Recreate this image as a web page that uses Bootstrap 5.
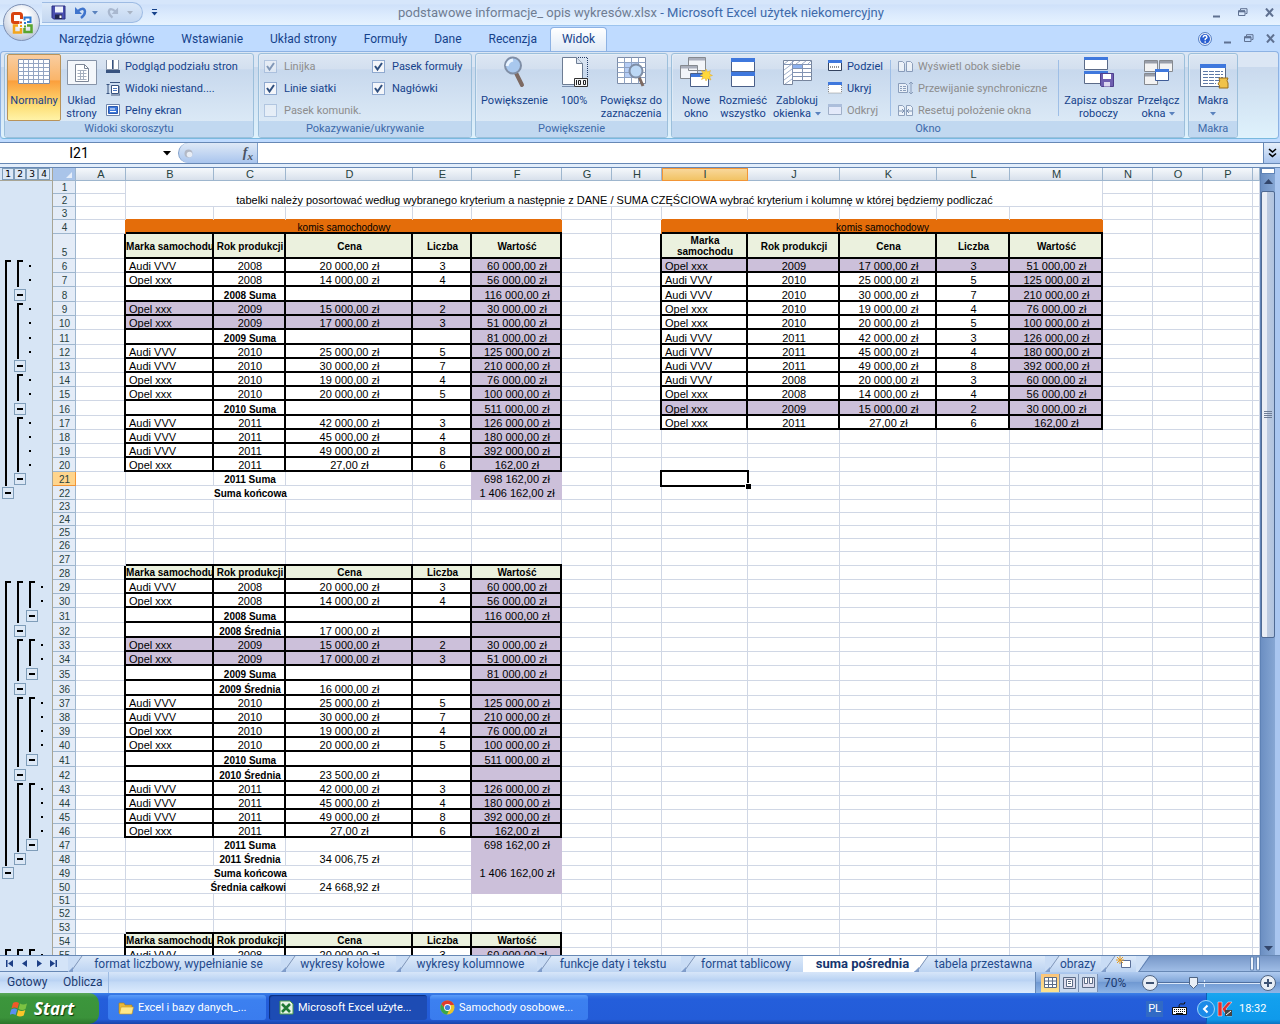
<!DOCTYPE html>
<html lang="pl">
<head>
<meta charset="utf-8">
<meta name="viewport" content="width=device-width, initial-scale=1">
<title>podstawowe informacje_ opis wykresów.xlsx - Microsoft Excel</title>
<link href="https://cdn.jsdelivr.net/npm/bootstrap@5.3.0/dist/css/bootstrap.min.css" rel="stylesheet">
<style>
:root{--ink:#15428b;--grid:#d0d7e5}
body{font:11px/13px Roboto,"Open Sans",sans-serif;color:var(--ink);background:#bfdbff}
button{font:inherit;color:inherit;border:0;background:none;padding:0}
svg{display:block;flex:none}
.titlebar{height:26px;background:linear-gradient(#d6e6fb 0 15%,#cfe1fa 20%,#dcebfd 60%,#e6f3ff);border-bottom:1px solid #9cc4ee}
.office-btn{left:3px;top:4px;width:37px;height:37px;border-radius:50%;background:radial-gradient(circle at 50% 35%,#fff 0 25%,#d5dce8 60%,#9fb0cc);border:1px solid #7d90b4;z-index:5}
.quick{margin-left:42px;height:21px;width:101px;border:1px solid #9dbbe3;border-radius:0 11px 11px 0;border-left:0;background:linear-gradient(#dbe8f8,#c3d7f1);padding-left:9px}
.title-text{font-size:13px;line-height:28px;padding-right:89px}
.title-text span{color:#6f7d92}.title-text b{font-weight:400;color:#3e6aaa}
.win-btns{gap:17px;padding-right:6px}
.doc-btns{gap:12px;padding-right:5px}
.menu-tabs{height:25px;padding-left:45px}
.menu-tabs .tab-link{font-size:12px;line-height:23px;padding:0 12px 0 13px;color:var(--ink);text-decoration:none;border:1px solid transparent;border-bottom:0}
.menu-tabs .on{background:linear-gradient(#fff,#dfeaf7);border-color:#8db2e3;border-radius:4px 4px 0 0;height:24px;padding:0 11px}
.ribbon{height:89px;border:1px solid #8db2e3;border-bottom-color:#79b9de;border-radius:4px;background:linear-gradient(#dbe6f4 0 17%,#c9d9ed 18%,#dff2fc);padding:1px 0 0 3px;gap:3px;margin-right:1px}
.rgroup{height:85px;border:1px solid #9cbfdb;border-radius:3px;background:linear-gradient(#dde7f3 0,#d3dfef 18%,#c7d8ed 19%,#dbe9f6 82%);box-shadow:inset 1px 1px #ecf3fa80}
.rgroup .cap{height:16px;line-height:15px;background:#c1d8f0;color:#3e6aaa;text-align:center;border-radius:0 0 2px 2px}
.rbody{padding:0 5px}
.g-views{width:250px;margin-right:1px}.g-views .rbody{padding:0 2px}
.g-show{width:214px}.g-zoom{width:193px}.g-win{width:514px}.g-mac{width:50px}
.big{display:flex;flex-direction:column;align-items:center;height:67px;line-height:13px;padding-top:1px;white-space:nowrap}
.big svg{margin-bottom:3px}
.big.sel{width:54px;border:1px solid #b9935a;border-radius:2px;background:linear-gradient(#f9cda0,#fab56a 38%,#fb9f3c 40%,#fde07a 80%,#fff3a8);padding-top:0}
.big.sel svg{margin-bottom:5px}
.big .arrow{margin:0}
.big .below{margin-top:5px}
.b41{width:41px}.b38{width:38px}.b56{width:56px}.b52{width:52px}.b79{width:79px}
.small-list{display:flex;flex-direction:column;padding-top:1px}
.small-list>*{height:22px;display:flex;align-items:center;gap:5px;white-space:nowrap}
.small-list label{gap:7px}
.l-views{padding-left:4px}.l-checks{width:108px}.l-split{padding-left:5px;width:68px}.l-side{width:160px}
.off{color:#8d8d8d}
.off svg{opacity:.55}
.vsep{width:1px;height:56px;background:#9ebee6;margin-top:6px}
.vsep.first{margin-left:-1px;margin-right:7px}
.ck{appearance:none;width:13px;height:13px;margin:0;border:1px solid #8fa9cf;background:#f4f6fa;flex:none}
.ck:checked{background:#f4f6fa url("data:image/svg+xml,%3Csvg xmlns='http://www.w3.org/2000/svg' viewBox='0 0 11 11'%3E%3Cpath d='M2 5l2.5 3.5L9 2' fill='none' stroke='%2330507f' stroke-width='2'/%3E%3C/svg%3E")}
.ck:disabled{opacity:.5}
.fbar{height:22px;border-top:1px solid #6788b5;border-bottom:1px solid #6788b5;margin-top:3px;background:#fff}
.namebox{width:178px;border:0;font:14px/20px Roboto,"Liberation Sans",sans-serif;text-align:center;padding:0 20px 0 0;background:#fff}
.name-arrow{right:7px;top:8px}
.fx{width:80px;background:linear-gradient(#dfe9f6,#a9c5ee);border-radius:10px 0 0 10px;border:1px solid #7f9fca;border-width:0 1px;padding:0 4px 0 5px}
.fx span{font:italic 700 14px/18px "Liberation Serif",serif;color:#4a5364}
.fx sub{font-size:11px}
.finput{border:0;outline:0;min-width:0}
.fdown{width:17px;background:linear-gradient(#e6effa,#a9c5ee);border-left:1px solid #6788b5}
.strip{height:4px;background:#e3eefb;border-bottom:1px solid #6788b5}
.sheet{min-height:0;overflow:hidden;background:#fff}
.cells{min-width:0;overflow:hidden}
.grid{table-layout:fixed;border-collapse:separate;border-spacing:0;width:100%;font:11px/11px "Liberation Sans",Arial,sans-serif;color:#000}
.grid td,.grid th{padding:0 0 1px;white-space:nowrap;vertical-align:bottom;text-align:center;font-weight:400}
.grid td{--rw:-1px;--bw:-1px;--rc:var(--grid);--bc:var(--grid);box-shadow:inset var(--rw) 0 var(--rc),inset 0 var(--bw) var(--bc)}
.grid td.kb{--bw:-2px;--bc:#000;box-shadow:inset 0 var(--bw) var(--bc),inset var(--rw) 0 var(--rc)}
.grid td.kr{--rw:-2px;--rc:#000}
.grid td.nr{--rw:0px}
.grid td.lft{text-align:left;padding-left:3px}
.grid td.bold{font-weight:700;font-size:10px}
.grid td.hd{background:#ebf1de;font-weight:700;font-size:10px;vertical-align:middle}
.grid td.wrp{white-space:normal}
.grid td.pur{background:#ccc0da}
.grid td.sum{--rc:#ccc0da;--bc:#ccc0da}
.grid td.pr{--rc:#ccc0da}
.grid td.ora{background:#e46d0a;--rc:#e46d0a;font-size:10px}
.grid td.orb{--bc:#e46d0a}
.grid td.orr{--rc:#e46d0a}
.grid .colh{height:13px;background:linear-gradient(#f6f9fc,#d5deea);box-shadow:inset -1px -1px #9eb6ce;color:#27413e;padding:0 0 1px}
.grid .colh.pick{background:linear-gradient(#f9d99f,#f1c15f);box-shadow:inset 0 0 0 1px #f29536}
.grid .corner{background:#a9c4e9;box-shadow:inset -1px -1px #9eb6ce}
.grid .rowh{background:#e4ecf7;box-shadow:inset -1px -1px #9eb6ce;color:#27413e;font-size:10px}
.grid .rowh.pick{background:#ffd58d;box-shadow:inset -1px -1px #f29536}
.grid .outl{background:#d7e5f5;box-shadow:inset -1px 0 #a8a595;padding:0;vertical-align:top}
.grid .outl.top{box-shadow:inset -1px -1px #a8a595}
.slots{display:flex;padding-left:2px}
.slot{width:12px;height:100%;display:flex;align-items:center}
.slot.bar::before{content:"";width:2px;height:100%;margin-left:3px;background:#000}
.slot.cnr{padding-top:1px}
.slot.cnr::before{content:"";width:6px;height:100%;margin-left:3px;border:solid #000;border-width:2px 0 0 2px}
.slot.dot::before{content:"";width:2px;height:2px;margin-left:3px;background:#000}
.lvl{width:12px;height:12px;border:1px solid #7f9db9;background:#dce8f6;font:9px/10px "DejaVu Sans",sans-serif;color:#000;display:flex;align-items:center;justify-content:center}
.lvl i{width:6px;height:2px;background:#000}
.spill{display:flex;justify-content:flex-end}
.cursor{left:-2px;top:-2px;right:-1px;height:17px;border:2px solid #000}
.cursor::after{content:"";position:absolute;right:-4px;bottom:-4px;width:6px;height:6px;background:#000;border:solid #fff;border-width:1px 0 0 1px}
.vscroll{flex:none;width:15px;background:linear-gradient(90deg,#6c8fc2,#86a7d4);border-left:1px solid #5f83b6}
.vsplit{height:6px;border:1px solid #5f83b6;background:#fff}
.thumb{height:447px;border:1px solid #4f6a93;border-radius:2px;background:linear-gradient(90deg,#e9eef5 40%,#bccbe0 45%,#b0c3df);margin-top:17px}
.up{top:-13px}
.edge{flex:none;width:5px;background:#a9c6f0}
.sheettabs{height:17px;background:linear-gradient(#7797c8,#9fbde6);border-top:1px solid #6788b5;border-bottom:1px solid #6788b5;font-size:12px;line-height:16px}
.sheettabs .lead-in{width:68px;background:#d4e4f8;padding-left:6px}
.tab-split{margin-left:auto;margin-right:20px}
.stab{height:16px;background:linear-gradient(#dce9f9,#bdd4f2);white-space:nowrap;text-decoration:none;color:#1f4a8c;display:flex}
.stab span{flex:1;text-align:center;padding-right:7px}
.stab.on{background:#fff;font-weight:700;font-size:13px;color:#15356e}
.stab.on span{padding:0 0 0 8px}
.w1{width:213px}.w2{width:115px}.w3{width:141px}.w4{width:144px}.w5{width:122px}.w6{width:111px}.w7{width:131px}.w8{width:56px}.w9{width:35px}
.status{height:21px;background:linear-gradient(#d7e6f9,#b9d2f3 40%,#c4daf6 50%,#dcebfd);font-size:12px;line-height:20px;color:#1b3a70}
.status .mode{padding-left:7px;width:63px}
.status .calc{width:46px;border-right:1px solid #9dbbe3}
.status .rt{width:245px;background:linear-gradient(#b0cbf0,#83a8da 45%,#7099d2 50%,#8fb5e6);border-left:1px solid #6788b5;padding-left:5px}
.status .pct{padding-left:6px;width:43px}
.vbtn{width:19px;height:18px;background:#c9d9ee;border-right:1px solid #7d93b5;display:flex;align-items:center;justify-content:center}
.vbtn.on{background:linear-gradient(#fbc47a,#fde38e)}
.taskbar{height:31px;background:linear-gradient(#3b80e8,#2c66dc 12%,#245edb 20%,#235cd8 85%,#1a44a8);color:#fff;font:11px/14px Roboto,sans-serif}
.start{width:99px;border-radius:0 10px 10px 0;background:linear-gradient(#5aa85a,#3c963c 15%,#3a923a 80%,#2b742b);font:italic 700 17px/28px "Open Sans",sans-serif;text-shadow:1px 1px 1px #0a3a0a;color:#fff;padding-left:10px;gap:5px}
.tasks{padding-left:9px}
.task{width:158px;height:25px;border-radius:3px;background:linear-gradient(#5a9cf8,#3c80f0 20%,#3a7cee);padding-left:10px;gap:4px;margin:2px 3px 0 0}
.task.on{background:#1d4cb4;box-shadow:inset 1px 1px 1px #0c2f80}
.lang{gap:9px;padding-right:19px}
.lang span{background:#316ac5;padding:1px 2px}
.tray{width:74px;background:linear-gradient(#1aa6f0,#12a0ee 20%,#0f9aeb 85%,#0c72c0);border-left:1px solid #0d5fb5}
.tray .chev{margin-left:-10px}
.tray .kav{margin:0 6px 0 2px}
</style>
</head>
<body class="vh-100 overflow-hidden d-flex flex-column">
<header class="position-relative">
  <button class="office-btn position-absolute d-flex align-items-center justify-content-center" aria-label="Przycisk pakietu Office">
    <svg width="24" height="24" viewBox="0 0 24 24" fill="none"><path d="M9.500 11.500H4Q2.500 11.500 2.500 10V4Q2.500 2.500 4 2.500H9.500Q11.500 2.500 11.500 4.500V8" stroke="#d8430f" stroke-width="3"/><path d="M14.500 9.500V6.500H20.500V11H17" stroke="#2e7bd0" stroke-width="2"/><path d="M8 14.500H4V21.500H11V17" stroke="#f3a51c" stroke-width="2.500"/><path d="M14.500 17V21H21.500V14.500H17" stroke="#58a52e" stroke-width="2.500"/><path d="M10 10.500h2v2h-2z" fill="#d8430f"/><path d="M14 11h2v2h-2z" fill="#2e7bd0"/><path d="M10 14h2v2h-2z" fill="#f3a51c"/><path d="M14 14.500h2v2h-2z" fill="#58a52e"/></svg>
  </button>
  <div class="titlebar d-flex align-items-center">
    <div class="quick d-flex align-items-center">
      <button aria-label="Zapisz"><svg width="15" height="15" viewBox="0 0 15 15"><path d="M1 1h13v13H2.500L1 12.500z" fill="#4a4fb0" stroke="#2a2f80"/><path d="M4 1.500h8v6H4z" fill="#eef2fb"/><path d="M4 9.500h7v4.500H4z" fill="#222750"/><path d="M8.500 10.500h2V13h-2z" fill="#fff"/></svg></button>
      <button class="ms-2" aria-label="Cofnij"><svg width="14" height="13" viewBox="0 0 14 13"><path d="M3.500 5.500Q10 0 11 5.500Q11 9 7 12" fill="none" stroke="#3f74cc" stroke-width="2.400"/><path d="M1 1v7h7z" fill="#3f74cc"/></svg></button>
      <svg class="ms-1" width="6" height="4" viewBox="0 0 6 4"><path d="M0 0h6L3 3.500z" fill="#5a82bd"/></svg>
      <button class="ms-2" aria-label="Ponów"><svg width="13" height="13" viewBox="0 0 14 13"><path d="M10.500 5.500Q4 0 3 5.500Q3 9 7 12" fill="none" stroke="#a9b8cf" stroke-width="2.400"/><path d="M13 1v7H6z" fill="#a9b8cf"/></svg></button>
      <svg class="ms-2" width="6" height="4" viewBox="0 0 6 4"><path d="M0 0h6L3 3.500z" fill="#a9b4c4"/></svg>
    </div>
    <svg class="ms-2" width="7" height="7" viewBox="0 0 7 7"><path d="M1 .5h5" stroke="#15428b"/><path d="M.5 3h6L3.500 6.500z" fill="#15428b"/></svg>
    <div class="title-text flex-fill text-center text-nowrap"><span>podstawowe informacje_ opis wykresów.xlsx</span> <b>- Microsoft Excel użytek niekomercyjny</b></div>
    <div class="win-btns d-flex align-items-center">
      <svg width="8" height="10" viewBox="0 0 8 10"><path d="M0 8.500h7" stroke="#5f7191" stroke-width="2"/></svg>
      <svg width="10" height="9" viewBox="0 0 10 9" fill="none" stroke="#5f7191"><path d="M2.500 2V.7H9v4.800H7.500M.5 2.800h6.500v4.700H.5z"/><path d="M.5 3.300h6.500" stroke-width="2"/></svg>
      <svg width="9" height="9" viewBox="0 0 9 9"><path d="M1 .5l7 8M8 .5l-7 8" stroke="#5f7191" stroke-width="2"/></svg>
    </div>
  </div>
  <nav class="menu-tabs d-flex align-items-end">
    <a class="tab-link" href="#">Narzędzia główne</a><a class="tab-link" href="#">Wstawianie</a><a class="tab-link" href="#">Układ strony</a><a class="tab-link" href="#">Formuły</a><a class="tab-link" href="#">Dane</a><a class="tab-link" href="#">Recenzja</a><a class="tab-link on" href="#">Widok</a>
    <div class="doc-btns ms-auto d-flex align-items-center align-self-center">
      <svg width="14" height="14" viewBox="0 0 14 14"><circle cx="7" cy="7" r="6.400" fill="#fff" stroke="#4773bd"/><circle cx="7" cy="7" r="5" fill="#2a5fd0"/><path d="M5 5.500Q5.200 3.500 7 3.500T9 5.300Q9 6.300 7.200 7.200V8.300M7.200 9.300v1.400" fill="none" stroke="#fff" stroke-width="1.400"/></svg>
      <svg width="8" height="10" viewBox="0 0 8 10"><path d="M0 8.500h7" stroke="#5f7191" stroke-width="2"/></svg>
      <svg width="10" height="9" viewBox="0 0 10 9" fill="none" stroke="#5f7191"><path d="M2.500 2V.7H9v4.800H7.500M.5 2.800h6.500v4.700H.5z"/><path d="M.5 3.300h6.500" stroke-width="2"/></svg>
      <svg width="9" height="9" viewBox="0 0 9 9"><path d="M1 .5l7 8M8 .5l-7 8" stroke="#5f7191" stroke-width="2"/></svg>
    </div>
  </nav>
</header>

<section class="ribbon d-flex">
  <div class="rgroup g-views d-flex flex-column">
    <div class="rbody flex-fill d-flex">
      <button class="big sel"><svg width="34" height="34" viewBox="0 0 34 34"><path d="M1.500 4.500h31v24h-31z" fill="#fff" stroke="#7d8da8"/><path d="M1.500 8.500h31M1.500 12.500h31M1.500 16.500h31M1.500 20.500h31M1.500 24.500h31M6.500 4.500v24M11.500 4.500v24M16.500 4.500v24M21.500 4.500v24M26.500 4.500v24" stroke="#94a5c2"/></svg>Normalny</button>
      <button class="big b41"><svg width="34" height="36" viewBox="0 0 34 36"><path d="M2.500 5.500h29v24h-29z" fill="#f4f7fb" stroke="#8794a8"/><path d="M10.500 9.500h9l4 4v13h-13z" fill="#fff" stroke="#7d8797"/><path d="M19.500 9.500v4h4" fill="none" stroke="#7d8797"/><path d="M12.500 15.500h9M12.500 18.500h9M12.500 21.500h9M12.500 24.500h9M15.500 15v10M18.500 15v10" stroke="#a5afbe"/></svg>Układ<br>strony</button>
      <div class="small-list l-views">
        <button><svg width="14" height="14" viewBox="0 0 14 14"><path d="M0 1h13v12H0z" fill="#8794a8"/><path d="M1 1h5v9H1zM8 1h4v9H8z" fill="#fff"/><path d="M0 11h14v3H0z" fill="#37527f"/><path d="M6.500 1v9" stroke="#37527f"/></svg>Podgląd podziału stron</button>
        <button><svg width="14" height="15" viewBox="0 0 14 15"><path d="M.5 3.500h3M2 3.500v9M.5 12.500h3M4 1.500h10" stroke="#37527f"/><path d="M5.500 4.500h7v8h-7z" fill="#fff" stroke="#37527f"/><path d="M7 7.500h4M7 9.500h4" stroke="#4d78c0"/><path d="M5 14h9V5" fill="none" stroke="#4b5e80"/></svg>Widoki niestand....</button>
        <button><svg width="14" height="13" viewBox="0 0 14 13"><path d="M.5.500h13v11H.5z" fill="#fff" stroke="#6f86ad"/><path d="M2.500 2.500h9v7h-9z" fill="#3c78dc" stroke="#2c5aae"/><path d="M4 5h5M4 7.500h6" stroke="#fff"/></svg>Pełny ekran</button>
      </div>
    </div>
    <div class="cap">Widoki skoroszytu</div>
  </div>
  <div class="rgroup g-show d-flex flex-column">
    <div class="rbody flex-fill d-flex">
      <div class="small-list l-checks">
        <label class="off"><input class="ck" type="checkbox" checked disabled>Linijka</label>
        <label><input class="ck" type="checkbox" checked>Linie siatki</label>
        <label class="off"><input class="ck" type="checkbox" disabled>Pasek komunik.</label>
      </div>
      <div class="small-list">
        <label><input class="ck" type="checkbox" checked>Pasek formuły</label>
        <label><input class="ck" type="checkbox" checked>Nagłówki</label>
      </div>
    </div>
    <div class="cap">Pokazywanie/ukrywanie</div>
  </div>
  <div class="rgroup g-zoom d-flex flex-column">
    <div class="rbody flex-fill d-flex justify-content-between">
      <button class="big"><svg width="34" height="36" viewBox="0 0 34 36"><path d="M19 18l6 12" stroke="#7d6a62" stroke-width="4" stroke-linecap="round"/><circle cx="16" cy="10.500" r="8" fill="#a9c8ee" stroke="#7f8ea6" stroke-width="2"/><path d="M10 11Q11 6 16 5" stroke="#eaf4ff" stroke-width="3" fill="none"/></svg>Powiększenie</button>
      <button class="big"><svg width="30" height="36" viewBox="0 0 30 36"><path d="M3.500 2.500h14l6 6v21h-20z" fill="#fff" stroke="#6d7c93"/><path d="M17.500 2.500v6h6" fill="#dce5f2" stroke="#6d7c93"/><path d="M19 2.500h9.500v21M3.500 31.500h11" fill="none" stroke="#223a66" stroke-dasharray="1 1"/><path d="M15.500 23.500h13v8h-13z" fill="#f6f6f6" stroke="#333"/><path d="M17.500 25v5M19.500 25.500h2v4h-2zM24.500 25.500h2v4h-2z" fill="none" stroke="#222"/></svg>100%</button>
      <button class="big"><svg width="34" height="36" viewBox="0 0 34 36"><path d="M3.500 2.500h28v26h-28z" fill="#fff" stroke="#7d8da8"/><path d="M10 7h15v15H10z" fill="#b5cdf5"/><path d="M3.500 7.500h28M3.500 12.500h28M3.500 17.500h28M3.500 22.500h28M10.500 2.500v26M17.500 2.500v26M24.500 2.500v26" stroke="#8fa2c2"/><path d="M25 22l4 9" stroke="#7d6a62" stroke-width="3"/><circle cx="22" cy="16" r="6.500" fill="#bcd8f6" stroke="#7f8ea6" stroke-width="2"/></svg>Powiększ do<br>zaznaczenia</button>
    </div>
    <div class="cap">Powiększenie</div>
  </div>
  <div class="rgroup g-win d-flex flex-column">
    <div class="rbody flex-fill d-flex">
      <button class="big b38"><svg width="34" height="36" viewBox="0 0 34 36"><g fill="#f3f5f9" stroke="#85898f"><path d="M9.500 2.500h17v13h-17zM1.500 10.500h17v13h-17z"/></g><path d="M10 3h16v2.500H10zM2 11h16v2.500H2z" fill="#a9aebb"/><path d="M11.500 18.500h18v13h-18z" fill="#fff" stroke="#4a5f88"/><path d="M12 19h17v3H12z" fill="#3f78dd"/><path d="M27 14l1.500 3 3-1.500L30.500 19l3 1.500-3 1 1.500 3.500-3.500-1.500L27 26l-1-3-3.500 1.500L24 21.500l-3-1 3-1.500-1.500-3.500 3.500 1.500z" fill="#ffd83a" stroke="#e0a92a" stroke-width=".5"/></svg>Nowe<br>okno</button>
      <button class="big b56"><svg width="34" height="36" viewBox="0 0 34 36"><path d="M5.500 3.500h23v28h-23z" fill="#fff" stroke="#4a5f88"/><path d="M5 3h24v4H5zM5 17h24v4H5z" fill="#3f78dd"/><path d="M5 16.500h24" stroke="#4a5f88"/></svg>Rozmieść<br>wszystko</button>
      <button class="big b52"><svg width="34" height="36" viewBox="0 0 34 36"><path d="M3.500 5.500h28v20h-19v4h-9z" fill="#fff" stroke="#76849c"/><path d="M13 9h9v4h-9z" fill="#8db2f0"/><path d="M3.500 9.500h28M12.500 5.500v20M12.500 13.500h19M12.500 17.500h19M12.500 21.500h19M22.500 9.500v16" stroke="#8294b3"/><path d="M4 9l4-3M10 9l4-3M16 9l4-3M22 9l4-3M28 9l3-3M4 15l8-6M4 20l8-6M4 25l8-6M5 29l7-5" stroke="#9fb0cc"/></svg>Zablokuj<span class="d-flex align-items-center gap-1">okienka<svg class="arrow" width="6" height="4" viewBox="0 0 6 4"><path d="M0 0h6L3 3.500z" fill="#5a82bd"/></svg></span></button>
      <div class="small-list l-split">
        <button><svg width="14" height="12" viewBox="0 0 14 12"><path d="M.5.500h13v10H.5z" fill="#fff" stroke="#33425e"/><path d="M0 0h14v3H0z" fill="#3f78dd"/><path d="M2 7h10" stroke="#222" stroke-dasharray="1 1"/></svg>Podziel</button>
        <button><svg width="14" height="12" viewBox="0 0 14 12"><path d="M.5 3v8h13V3" fill="#fff" stroke="#888" stroke-dasharray="1 1"/><path d="M0 0h14v3H0z" fill="#3f78dd"/></svg>Ukryj</button>
        <button class="off"><svg width="14" height="12" viewBox="0 0 14 12"><path d="M.5.500h13v10H.5z" fill="#eef" stroke="#7484a4"/><path d="M0 0h14v3H0z" fill="#8ba0c8"/></svg>Odkryj</button>
      </div>
      <div class="vsep first"></div>
      <div class="small-list l-side off">
        <button><svg width="15" height="13" viewBox="0 0 15 13"><path d="M.5 1.500h4l2 2v8h-6zM8.500 1.500h4l2 2v8h-6z" fill="#fff" stroke="#53698f"/></svg>Wyświetl obok siebie</button>
        <button><svg width="15" height="14" viewBox="0 0 15 14"><path d="M.5 2.500h7l2 2v7h-9z" fill="#fff" stroke="#53698f"/><path d="M2 5.500h2M2 7.500h2M2 9.500h2M5 5.500h3M5 7.500h3M5 9.500h3" stroke="#53698f"/><path d="M13 1v12M11 3l2-2 2 2M11 11l2 2 2-2" stroke="#53698f" fill="none"/></svg>Przewijanie synchroniczne</button>
        <button><svg width="15" height="13" viewBox="0 0 15 13"><path d="M.5 1.500h4l2 2v8h-6zM8.500 1.500h4l2 2v8h-6z" fill="#fff" stroke="#53698f"/><path d="M1 7h5M4 5l2 2-2 2M14 7H9M11 5L9 7l2 2" stroke="#37527f" fill="none"/></svg>Resetuj położenie okna</button>
      </div>
      <div class="vsep"></div>
      <button class="big b79"><svg width="34" height="36" viewBox="0 0 34 36"><path d="M2.500 2.500h23v12h-23zM2.500 16.500h23v12h-23z" fill="#fff" stroke="#5a6a88"/><path d="M2 2h24v3H2zM2 16h24v3H2z" fill="#3f78dd"/><path d="M18.500 18.500h13v13h-12l-1-1z" fill="#6f5fb0" stroke="#4e3f8c"/><path d="M21 19h8v5h-8z" fill="#fff"/><path d="M22 27h6v4.500h-6z" fill="#ddd8f0"/></svg>Zapisz obszar<br>roboczy</button>
      <button class="big b41"><svg width="34" height="36" viewBox="0 0 34 36"><g fill="#f3f3f3" stroke="#85898f"><path d="M2.500 5.500h13v11h-13zM17.500 5.500h13v11h-13zM2.500 18.500h13v11h-13z"/></g><path d="M3 6h12v2.500H3zM18 6h12v2.500H18zM3 19h12v2.500H3z" fill="#999ea9"/><path d="M13.500 14.500h13v11h-13z" fill="#fff" stroke="#3f5c96"/><path d="M13 14h14v3H13z" fill="#3f78dd"/></svg>Przełącz<span class="d-flex align-items-center gap-1">okna<svg class="arrow" width="6" height="4" viewBox="0 0 6 4"><path d="M0 0h6L3 3.500z" fill="#5a82bd"/></svg></span></button>
    </div>
    <div class="cap">Okno</div>
  </div>
  <div class="rgroup g-mac d-flex flex-column">
    <div class="rbody flex-fill d-flex justify-content-center">
      <button class="big"><svg width="34" height="36" viewBox="0 0 34 36"><path d="M4.500 9.500h25v22h-25z" fill="#fff" stroke="#5a6a88"/><path d="M4 9h26v4H4z" fill="#3f78dd"/><path d="M7 16.500h20M7 19.500h20M7 22.500h20M7 25.500h20M7 28.500h13" stroke="#5f7aa8" stroke-dasharray="5 1"/><path d="M23 23h9q-2 3 0 5v5h-9q2-2-1-4q3-3 1-6z" fill="#f0c24a" stroke="#9a6f1a"/></svg>Makra<svg class="below" width="6" height="4" viewBox="0 0 6 4"><path d="M0 0h6L3 3.500z" fill="#5a82bd"/></svg></button>
    </div>
    <div class="cap">Makra</div>
  </div>
</section>

<div class="fbar d-flex">
  <div class="position-relative d-flex"><input class="namebox" value="I21" aria-label="Pole nazwy"><svg class="name-arrow position-absolute" width="8" height="5" viewBox="0 0 8 5"><path d="M0 0h8L4 4.500z"/></svg></div>
  <div class="fx d-flex align-items-center justify-content-between"><svg width="9" height="9" viewBox="0 0 9 9"><circle cx="4.500" cy="4.500" r="4" fill="#b3b9c6"/><circle cx="5.500" cy="5.500" r="2.800" fill="#e8edf5"/></svg><span>f<sub>x</sub></span></div>
  <input class="finput flex-fill" aria-label="Pasek formuły">
  <button class="fdown d-flex align-items-center justify-content-center" aria-label="Rozwiń"><svg width="9" height="10" viewBox="0 0 9 10" fill="none" stroke="#000" stroke-width="1.600"><path d="M1 1l3.500 3L8 1M1 5.500l3.500 3L8 5.500"/></svg></button>
</div>
<div class="strip"></div>

<main class="sheet flex-fill d-flex">
  <div class="cells flex-fill"><table class="grid" id="grid"></table></div>
  <div class="vscroll d-flex flex-column">
    <div class="vsplit"></div>
    <div class="thumb position-relative d-flex align-items-center justify-content-center">
      <svg width="8" height="7" viewBox="0 0 8 7"><path d="M0 .5h8M0 2.500h8M0 4.500h8M0 6.500h8" stroke="#6d7d96"/></svg>
      <svg class="up position-absolute" width="9" height="5" viewBox="0 0 9 5"><path d="M0 5h9L4.500 0z" fill="#33466b"/></svg>
    </div>
    <svg class="mt-auto mx-auto mb-1" width="9" height="5" viewBox="0 0 9 5"><path d="M0 0h9L4.500 5z" fill="#33466b"/></svg>
  </div>
  <div class="edge"></div>
</main>

<nav class="sheettabs d-flex" id="tabs">
  <div class="lead-in d-flex align-items-center">
    <svg width="52" height="8" viewBox="0 0 52 8" fill="#1d3f86"><path d="M0 0h1.500v7H0zM7 0v7L2 3.500zM21 0v7l-5-3.500zM31 0v7l5-3.500zM44 0v7l5-3.500zM49.500 0H51v7h-1.500z"/></svg>
  </div>
</nav>

<footer class="status d-flex">
  <span class="mode">Gotowy</span><span class="calc">Oblicza</span>
  <div class="rt ms-auto d-flex align-items-center">
    <button class="vbtn on" aria-label="Normalny"><svg width="13" height="11" viewBox="0 0 13 11"><path d="M.5.500h12v10H.5zM.5 4h12M.5 7.500h12M4.500.5v10M8.500.5v10" fill="#fff" stroke="#5b6b85"/></svg></button>
    <button class="vbtn" aria-label="Układ strony"><svg width="13" height="12" viewBox="0 0 13 12"><path d="M.5.500h12v11H.5z" fill="#dde" stroke="#5b6b85"/><path d="M3.500 2.500h6v7h-6z" fill="#fff" stroke="#5b6b85"/><path d="M5 4.500h3M5 6.500h3" stroke="#5b6b85"/></svg></button>
    <button class="vbtn" aria-label="Podgląd podziału stron"><svg width="13" height="11" viewBox="0 0 13 11"><path d="M.5.500h12v10H.5z" fill="#dde" stroke="#5b6b85"/><path d="M2.500.5h3v6h-3zM7.500.5h3v6h-3z" fill="#fff" stroke="#5b6b85"/></svg></button>
    <span class="pct">70%</span>
    <svg width="136" height="18" viewBox="0 0 136 18"><path d="M17 9.500h103M63.500 6v7" stroke="#dbe8fa"/><path d="M17 8.500h103" stroke="#4f6f9f"/><g fill="#e8eef6" stroke="#4f6482"><circle cx="9" cy="9" r="7.500"/><circle cx="127" cy="9" r="7.500"/><path d="M48.500 3.500h8v7l-4 4-4-4z"/></g><path d="M5 9h8M123 9h8M127 5v8" stroke="#3d5273" stroke-width="2"/></svg>
  </div>
</footer>

<div class="taskbar d-flex">
  <button class="start d-flex align-items-center"><svg width="19" height="18" viewBox="0 0 19 18"><path d="M3 3q3-2 6 0L7.500 8.500q-3-2-6 0z" fill="#f0592a"/><path d="M10 3.500q3 2 7 0L15.500 9q-3 2-7 0z" fill="#7cc242"/><path d="M1.200 9.500q3-2 6 0L5.500 15q-3-2-6 0z" fill="#5a8ff0"/><path d="M8.300 10q3 2 7 0l-1.600 5.500q-4 2-7 0z" fill="#fbc52a"/></svg>Start</button>
  <div class="tasks d-flex">
    <button class="task d-flex align-items-center"><svg width="16" height="14" viewBox="0 0 16 14"><path d="M1 12V2h5l1 2h7v8z" fill="#e9b83a" stroke="#a87a14" stroke-width=".6"/><path d="M1.500 13l1.500-7h12.500l-1.500 7z" fill="#ffe88a" stroke="#c9981f" stroke-width=".6"/></svg>Excel i bazy danych_...</button>
    <button class="task on d-flex align-items-center"><svg width="15" height="15" viewBox="0 0 15 15"><path d="M1 1h10l3 3v10H1z" fill="#e6f4e6" stroke="#4a9a4a"/><path d="M3 4l8 8M11 4l-8 8" stroke="#1f7a34" stroke-width="2.600"/></svg>Microsoft Excel użyte...</button>
    <button class="task d-flex align-items-center"><svg width="15" height="15" viewBox="0 0 15 15"><circle cx="7.500" cy="7.500" r="7" fill="#e8c52c"/><path d="M1.300 4A7 7 0 0 1 14 5H7.500L5 9z" fill="#de3b2c"/><path d="M1.300 4A7 7 0 0 0 7 14.500L9.500 9H5z" fill="#3aa64a"/><circle cx="7.500" cy="7.500" r="3.400" fill="#fff"/><circle cx="7.500" cy="7.500" r="2.600" fill="#3f7fe0"/></svg>Samochody osobowe...</button>
  </div>
  <div class="lang ms-auto d-flex align-items-center">
    <span>PL</span>
    <svg width="15" height="13" viewBox="0 0 15 13"><path d="M7 5Q7 1 10 2T13 0" stroke="#111" fill="none"/><path d="M.5 5.500h14v7H.5z" fill="#fff" stroke="#111"/><path d="M2 7.500h11M2 9.500h11" stroke="#111" stroke-dasharray="1 1"/><path d="M4 11.500h7" stroke="#111"/></svg>
  </div>
  <div class="tray d-flex align-items-center">
    <svg class="chev" width="18" height="18" viewBox="0 0 18 18"><circle cx="9" cy="9" r="8.500" fill="#1b8be8" stroke="#9fd4fb"/><path d="M10.500 5.500L7 9l3.500 3.500" stroke="#fff" stroke-width="2" fill="none"/></svg>
    <svg class="kav" width="16" height="16" viewBox="0 0 16 16"><path d="M1 1h4v14H1z" fill="#e03030" stroke="#fff" stroke-width=".5"/><path d="M5 8l6-7h4L9 8l6 7h-5z" fill="#e03030" stroke="#fff" stroke-width=".5"/><path d="M8 9h7v6H8z" fill="#444"/><path d="M9 14l5-4" stroke="#fff"/></svg>
    <span>18:32</span>
  </div>
</div>

<script>
const widths=[53,23,50,88,72,127,59,90,50,50,86,92,97,73,93,50,50,50];
const tall={5:25,51:13,52:13,1:13,2:13,3:13,23:13,24:13,25:13,26:13,8:15,11:15,16:15,31:15,32:15,35:15,36:15,41:15,42:15};
const A='Audi VVV',O='Opel xxx',H=['Marka samochodu','Rok produkcji','Cena','Liczba','Wartość'];
const sum=(t,f)=>['',t,'','',f], avg=(t,d)=>['',t,d,'',''];
const y08=[[A,'2008','20 000,00 zł','3','60 000,00 zł'],[O,'2008','14 000,00 zł','4','56 000,00 zł']];
const y09=[[O,'2009','15 000,00 zł','2','30 000,00 zł'],[O,'2009','17 000,00 zł','3','51 000,00 zł']];
const y10=[[A,'2010','25 000,00 zł','5','125 000,00 zł'],[A,'2010','30 000,00 zł','7','210 000,00 zł'],[O,'2010','19 000,00 zł','4','76 000,00 zł'],[O,'2010','20 000,00 zł','5','100 000,00 zł']];
const y11=[[A,'2011','42 000,00 zł','3','126 000,00 zł'],[A,'2011','45 000,00 zł','4','180 000,00 zł'],[A,'2011','49 000,00 zł','8','392 000,00 zł'],[O,'2011','27,00 zł','6','162,00 zł']];
const s=[sum('2008 Suma','116 000,00 zł'),sum('2009 Suma','81 000,00 zł'),sum('2010 Suma','511 000,00 zł'),sum('2011 Suma','698 162,00 zł'),sum('Suma końcowa','1 406 162,00 zł')];
const left={}, right={};
[H,...y08,s[0],...y09,s[1],...y10,s[2],...y11,s[3],s[4]].forEach((r,i)=>left[5+i]=r);
[H,...y08,s[0],avg('2008 Średnia','17 000,00 zł'),...y09,s[1],avg('2009 Średnia','16 000,00 zł'),...y10,s[2],avg('2010 Średnia','23 500,00 zł'),...y11,s[3],avg('2011 Średnia','34 006,75 zł'),s[4],avg('Średnia całkowi','24 668,92 zł')].forEach((r,i)=>left[28+i]=r);
left[54]=H; left[55]=y08[0];
[H,y09[1],...y10.slice(0,1),y10[1],...y10.slice(2),...y11.slice(0,3),...y08,y09[0],y11[3]].forEach((r,i)=>right[5+i]=r);
const boxed=(r,c)=>(c>=1&&c<=5&&((r>=5&&r<=20)||(r>=28&&r<=46)||r>=54))||(c>=8&&c<=12&&r>=5&&r<=17);

/* outline brackets: [level, first row, row of the collapse button] */
const groups=[[0,6,22],[1,6,8],[1,9,13],[1,14,16],[1,17,21],[0,29,49],[1,29,32],[1,33,36],[1,37,42],[1,43,48],[2,29,31],[2,33,35],[2,37,41],[2,43,47],[0,55,90],[1,55,90],[2,55,90]];
const dots={}; groups.forEach(([l,a,b])=>{if(l==1&&a<28)for(let r=a;r<b;r++)dots[r]=2;if(l==2)for(let r=a;r<b;r++)dots[r]=3});
function outline(r,h){
  let o='';
  for(let l=0;l<4;l++){
    let k='',inner='';
    groups.forEach(([gl,a,b])=>{if(gl!=l)return;if(r==a)k='cnr';else if(r>a&&r<b)k='bar';else if(r==b)inner='<button class="lvl" aria-label="Zwiń"><i></i></button>'});
    if(dots[r]==l)k='dot';
    o+=`<div class="slot ${k}">${inner}</div>`;
  }
  return `<td class="outl"><div class="slots" style="height:${h}px">${o}</div></td>`;
}
let html='<colgroup>'+widths.map(w=>`<col style="width:${w}px">`).join('')+'<col></colgroup>';
html+='<tr><th class="outl top"><div class="slots">'+[1,2,3,4].map(n=>`<button class="lvl">${n}</button>`).join('')+'</div></th><th class="corner"><svg width="23" height="12" viewBox="0 0 23 12"><path d="M19 4v6h-6z" fill="#e6eefa"/></svg></th>'
 +[...'ABCDEFGHIJKLMNOP'].map(c=>`<th class="colh${c=='I'?' pick':''}">${c}</th>`).join('')+'<th class="colh"></th></tr>';
for(let r=1;r<=55;r++){
  const h=tall[r]||14;
  html+=`<tr style="height:${h}px">${outline(r,h)}<th class="rowh${r==21?' pick':''}">${r}</th>`;
  for(let c=0;c<17;c++){
    if(r<=2&&c>=1&&c<=12){ if(r==1&&c==1)html+='<td colspan="12" rowspan="2">tabelki należy posortować według wybranego kryterium a następnie z DANE / SUMA CZĘŚCIOWA wybrać kryterium i kolumnę w której będziemy podliczać</td>'; continue; }
    if(r==4&&(c==1||c==8)){ html+='<td colspan="5" class="ora kb">komis samochodowy</td>'; c+=4; continue; }
    const k=[]; let t='';
    if(boxed(r,c)||boxed(r,c+1))k.push('kr');
    if(boxed(r,c)||boxed(r+1,c))k.push('kb');
    const row=c>=1&&c<=5?left[r]:c>=8&&c<=12?right[r]:null, i=c<=5?c-1:c-8;
    if(row){
      t=row[i];
      if(row===H){k.push('hd'); if(c==8)k.push('wrp');}
      else{
        if(i==4||row[1]=='2009')k.push('pur');
        if(i==0)k.push('lft');
        if(i==1&&row[0]=='')k.push('bold');
        if(i==4&&!boxed(r,c))k.push('sum');
        if(c==4&&!boxed(r,c))k.push('pr');
        if(r==22||r==49){if(c==1||c==2)k.push('nr')}
        if(r==50&&c==1)k.push('nr');
      }
      if(t=='Średnia całkowi')t=`<div class="spill"><span>${t}</span></div>`;
    }
    if(r==3&&((c>=1&&c<=5)||(c>=8&&c<=12)))k.push('orb');
    if(r==4&&(c==0||c==7))k.push('orr');
    if(r==21&&c==8){k.push('position-relative');t='<div class="cursor position-absolute"></div>';}
    html+=`<td class="${k.join(' ')}">${t}</td>`;
  }
  html+='</tr>';
}
document.getElementById('grid').innerHTML=html;

const tabs=document.getElementById('tabs');
const slash=on=>`<svg width="15" height="16" viewBox="0 0 15 16"><path d="M0 0h13.500L3 15H0z" fill="${on?'#fff':'#c9dcf5'}"/><path d="M14 0L3 15.500" stroke="#7f95b8"/><path d="M0 16h5V11z" fill="#7f9cca"/></svg>`;
['format liczbowy, wypełnianie se','wykresy kołowe','wykresy kolumnowe','funkcje daty i tekstu','format tablicowy','suma pośrednia','tabela przestawna','obrazy'].forEach((t,i)=>{
  tabs.insertAdjacentHTML('beforeend',`<a href="#" class="stab w${i+1}${i==5?' on':''}">${i==5?'':slash(i==6)}<span>${t}</span></a>`);
});
tabs.insertAdjacentHTML('beforeend',`<button class="stab w9" aria-label="Wstaw arkusz">${slash()}<svg width="16" height="14" viewBox="0 0 16 14"><path d="M5.500 4.500h9v7h-9z" fill="#fff" stroke="#5a6f98"/><path d="M4 0v8M0 4h8M1 1l6 6M7 1L1 7" stroke="#e59a1f"/></svg></button><svg width="15" height="16" viewBox="0 0 15 16"><path d="M0 0h13L2 16H0z" fill="#cfe0f6"/><path d="M14 0L3 15.500" stroke="#5f7fb0"/></svg><svg class="tab-split" width="10" height="15" viewBox="0 0 10 15"><path d="M.5 1h3v13h-3zM6.500 1h3v13h-3z" fill="#eef4fc" stroke="#6788b5"/></svg>`);
</script>
<script src="https://cdn.jsdelivr.net/npm/bootstrap@5.3.0/dist/js/bootstrap.bundle.min.js"></script>
</body>
</html>
